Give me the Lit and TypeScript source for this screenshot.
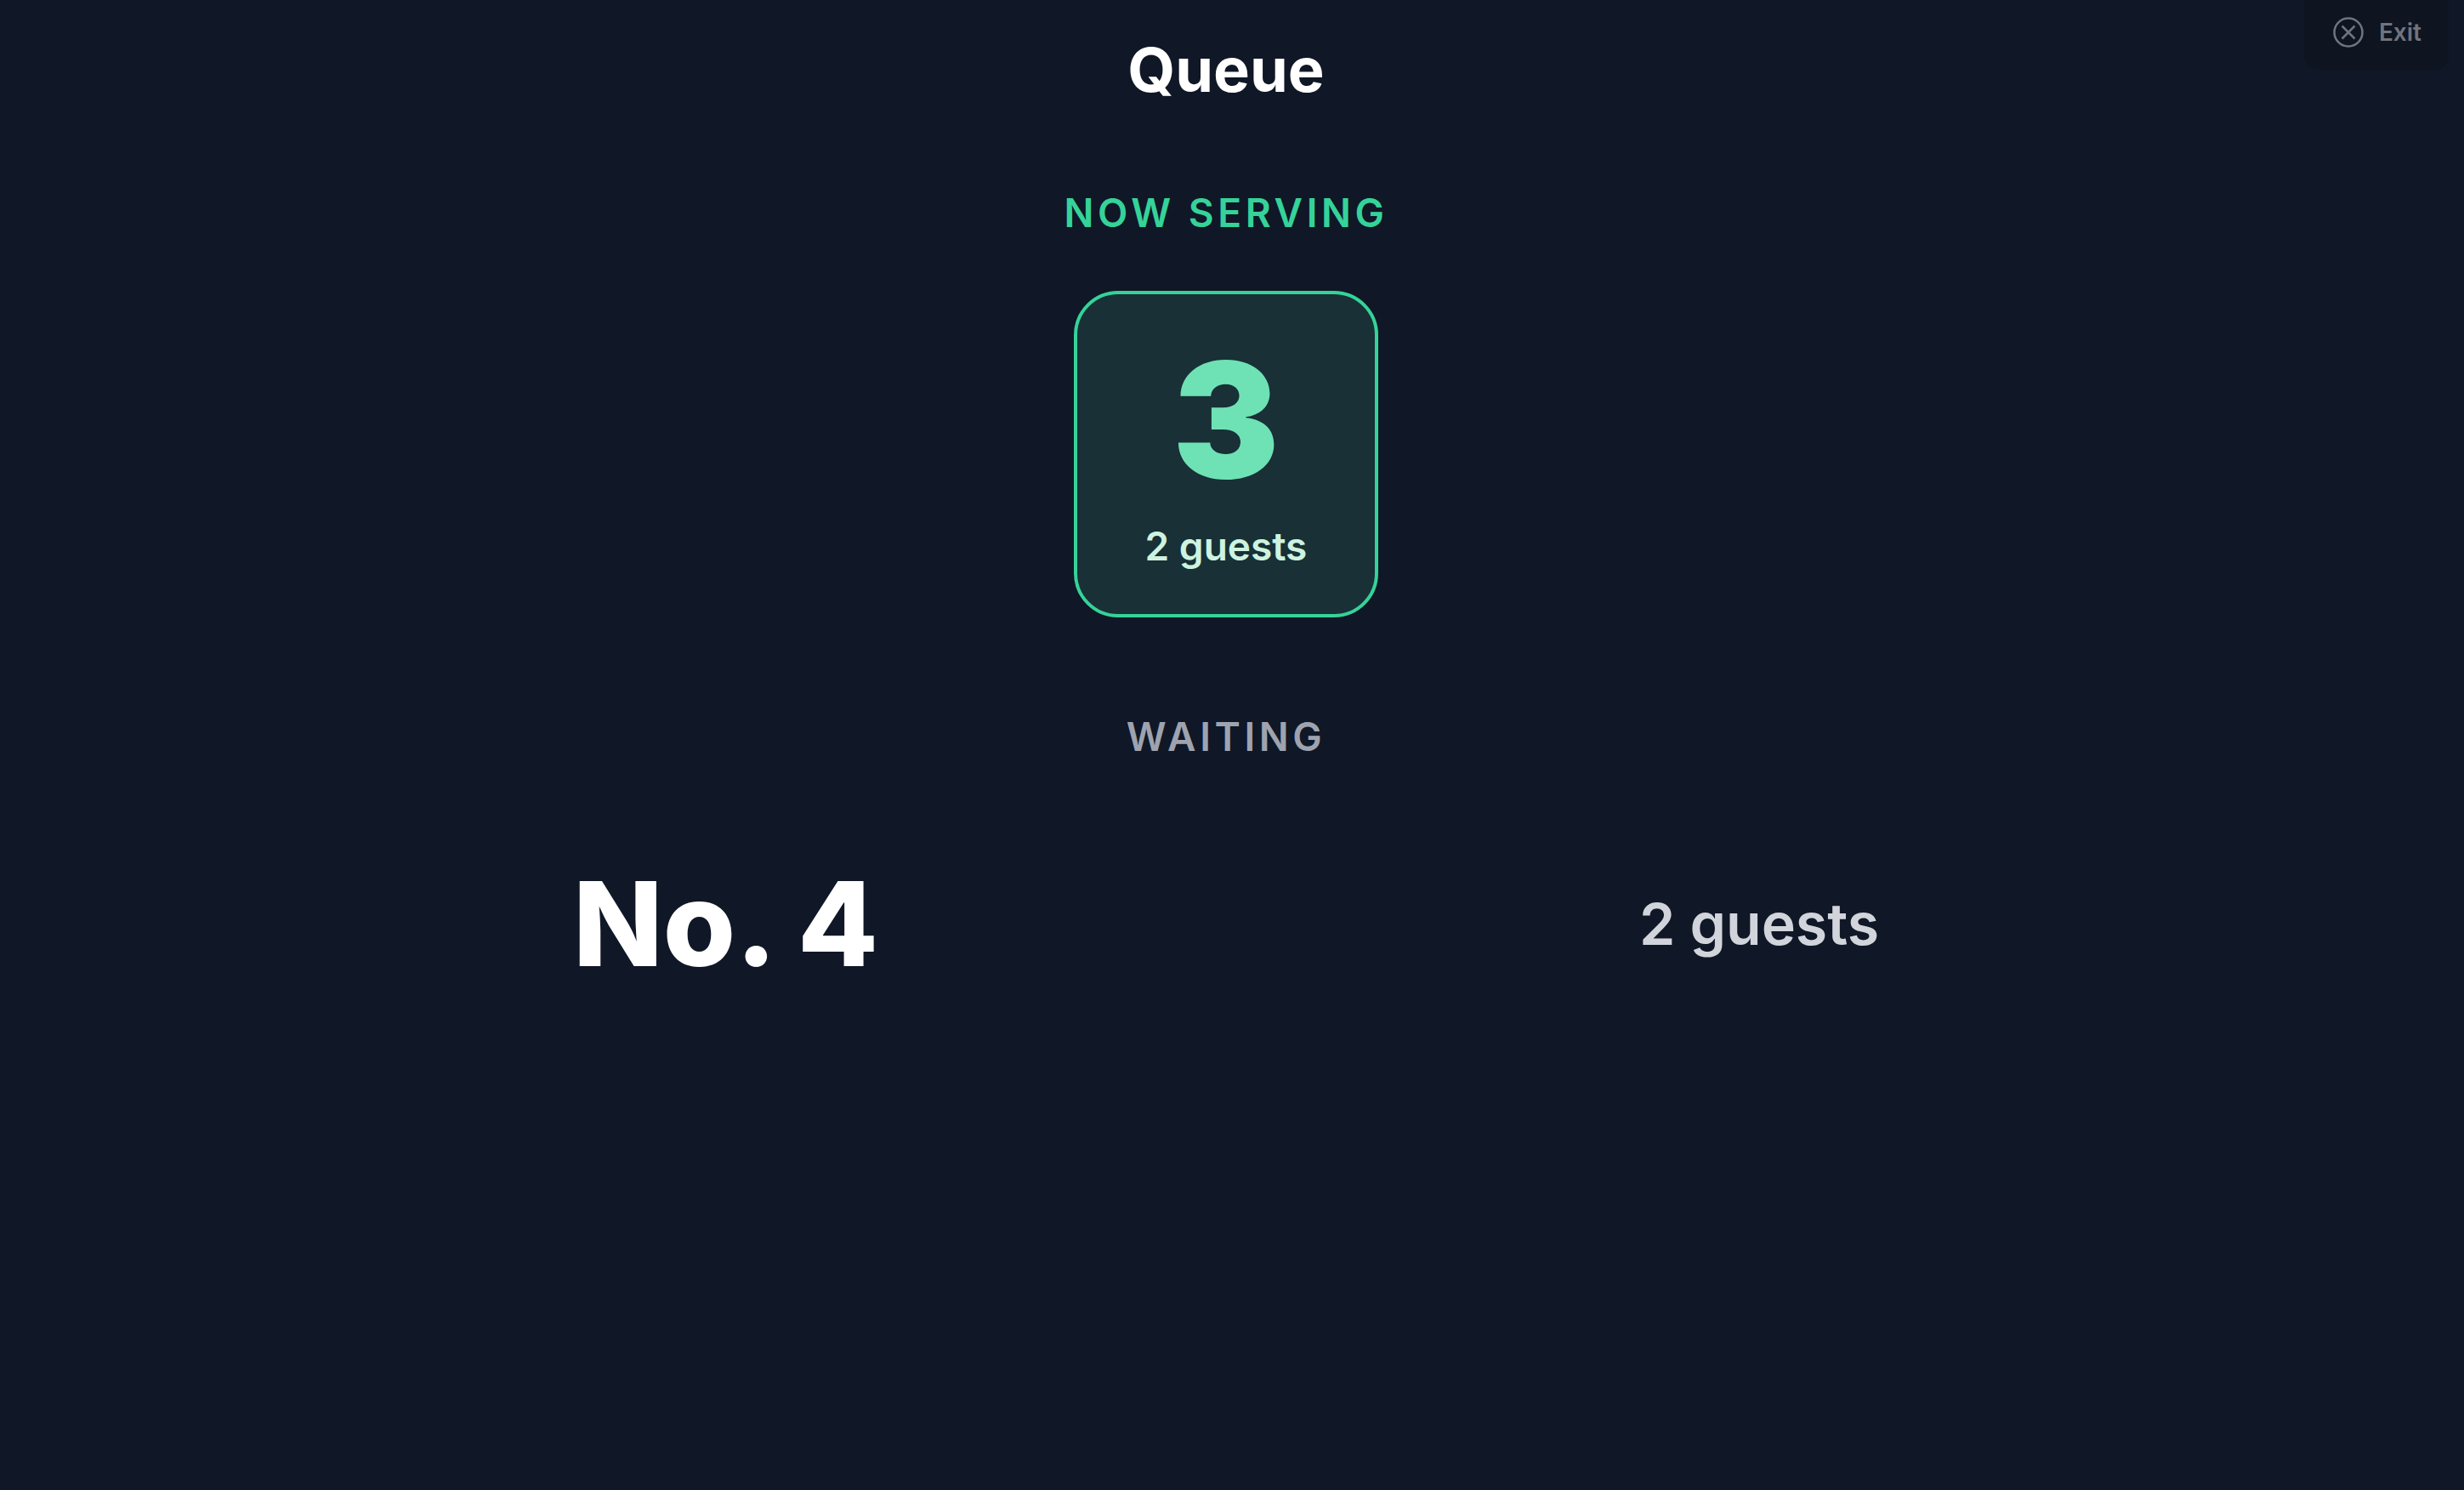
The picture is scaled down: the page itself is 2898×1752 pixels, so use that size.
import { LitElement, html, css } from "lit";
import { customElement, property, state } from "lit/decorators.js";

interface Party {
  number: number;
  guests: number;
}

@customElement("exit-button")
class ExitButton extends LitElement {
  static styles = css`
    :host {
      display: block;
    }
    .exit {
      display: flex;
      align-items: center;
      gap: 16px;
      height: 82px;
      padding: 0 32px 6px;
      border: 0;
      border-radius: 0 0 16px 16px;
      background: #0e1420;
      color: #70747f;
      font: 600 28px/40px Inter, "Liberation Sans", sans-serif;
      cursor: pointer;
    }
    .icon {
      width: 40px;
      height: 40px;
      fill: none;
      stroke: currentColor;
      stroke-width: 2.5;
    }
  `;

  render() {
    return html`
      <button class="exit" type="button">
        <svg class="icon" viewBox="0 0 40 40" aria-hidden="true">
          <circle cx="20" cy="20" r="16.5" />
          <path d="M12.5 12.5l15 15M27.5 12.5l-15 15" />
        </svg>
        Exit
      </button>
    `;
  }
}

@customElement("serving-card")
class ServingCard extends LitElement {
  @property({ attribute: false }) party!: Party;

  static styles = css`
    :host {
      display: block;
    }
    .card {
      display: flex;
      flex-direction: column;
      align-items: center;
      gap: 20px;
      padding: 52px 80px 48px;
      border: 4px solid #35d399;
      border-radius: 52px;
      background: #183036;
    }
    .number {
      color: #6ee2b5;
      font-size: 188px;
      font-weight: 900;
      line-height: 192px;
    }
    .guests {
      color: #cdf3e0;
      font-size: 46px;
      font-weight: 600;
      line-height: 64px;
    }
  `;

  render() {
    return html`
      <div class="card">
        <div class="number">${this.party.number}</div>
        <div class="guests">${this.party.guests} guests</div>
      </div>
    `;
  }
}

@customElement("app-root")
class AppRoot extends LitElement {
  @state() private serving: Party[] = [{ number: 3, guests: 2 }];
  @state() private waiting: Party[] = [{ number: 4, guests: 2 }];

  static styles = css`
    :host {
      display: block;
      min-height: 100vh;
      box-sizing: border-box;
      padding-right: 14px;
      position: relative;
      background: #101726;
      color: #ffffff;
      font-family: Inter, "Liberation Sans", sans-serif;
    }
    .corner {
      position: absolute;
      top: 0;
      right: 18px;
    }
    .board {
      display: flex;
      flex-direction: column;
      align-items: center;
      padding-top: 42px;
    }
    .title {
      margin: 0;
      font-size: 72px;
      font-weight: 700;
      line-height: 80px;
    }
    .section {
      display: flex;
      flex-direction: column;
      align-items: center;
      width: 100%;
    }
    .now {
      gap: 60px;
      margin-top: 96px;
    }
    .next {
      gap: 116px;
      margin-top: 108px;
    }
    .label {
      margin: 0;
      font-size: 46px;
      font-weight: 600;
      line-height: 64px;
      letter-spacing: 0.1em;
      text-transform: uppercase;
    }
    .now .label {
      color: #35d399;
    }
    .next .label {
      color: #9ea3af;
    }
    .cards {
      display: flex;
      flex-wrap: wrap;
      justify-content: center;
      gap: 48px;
    }
    .list {
      width: 100%;
      max-width: 1536px;
      margin: 0;
      padding: 0;
      list-style: none;
    }
    .row {
      display: flex;
      align-items: center;
      justify-content: space-between;
    }
    .number {
      font-size: 138px;
      font-weight: 800;
      line-height: 144px;
    }
    .guests {
      color: #d1d5db;
      font-size: 68px;
      font-weight: 600;
      line-height: 80px;
    }
  `;

  render() {
    return html`
      <main class="board">
        <h1 class="title">Queue</h1>
        <section class="section now">
          <h2 class="label">Now serving</h2>
          <div class="cards">
            ${this.serving.map((p) => html`<serving-card .party=${p}></serving-card>`)}
          </div>
        </section>
        <section class="section next">
          <h2 class="label">Waiting</h2>
          <ul class="list">
            ${this.waiting.map(
              (p) => html`
                <li class="row">
                  <span class="number">No. ${p.number}</span>
                  <span class="guests">${p.guests} guests</span>
                </li>
              `
            )}
          </ul>
        </section>
      </main>
      <exit-button class="corner"></exit-button>
    `;
  }
}
